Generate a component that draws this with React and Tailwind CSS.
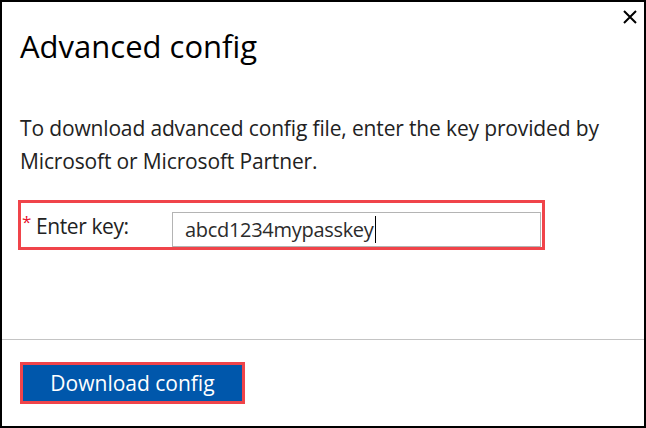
import React from 'react';

const font = { fontFamily: '"Open Sans", "Noto Sans", sans-serif' };

const CloseIcon = () => (
    <svg width="14" height="14" viewBox="0 0 14 14" fill="none">
        <path d="M1 1 L13 13 M13 1 L1 13" stroke="#000" strokeWidth="2" />
    </svg>
);

const App = () => {
    return (
        <div
            className="relative w-[646px] h-[428px] border-2 border-black bg-white flex flex-col text-[#222]"
            style={font}
        >
            <button className="absolute top-[8px] right-[7px] w-[14px] h-[14px] flex items-center justify-center">
                <CloseIcon />
            </button>

            <div className="h-[338px] border-b border-[#c4c4c4] px-[18px] pt-[24px]">
                <h1 className="text-[31px] leading-[40px] text-black">Advanced config</h1>

                <p className="mt-[46px] text-[21px] leading-[33px] tracking-[-0.15px]">
                    To download advanced config file, enter the key provided by Microsoft or Microsoft Partner.
                </p>

                <div className="mt-[22px] -ml-[2px] w-[527px] h-[50px] border-[3px] border-[#f0444a] flex items-end">
                    <label className="self-start mt-[9px] ml-[1px] text-[21px] leading-[28px] tracking-[-0.4px] flex">
                        <span className="text-[#e8112d] text-[17px] leading-[20px] mr-[5px]">*</span>
                        Enter key:
                    </label>
                    <div className="ml-auto mr-[1px] w-[369px] h-[35px] border border-[#b4b4b4] pl-[12px] flex items-center text-[20px] tracking-[-0.3px] text-[#2b2b2b]">
                        <span>abcd1234mypasskey</span>
                        <span className="w-px h-[27px] bg-black ml-[1px]" />
                    </div>
                </div>
            </div>

            <div className="pt-[22px] pl-[18px]">
                <div className="w-[225px] h-[42px] border-[3px] border-[#f0444a]">
                    <button className="w-full h-full bg-[#0057ab] text-white text-[21px] leading-[34px]">
                        Download config
                    </button>
                </div>
            </div>
        </div>
    );
};

export default App;
